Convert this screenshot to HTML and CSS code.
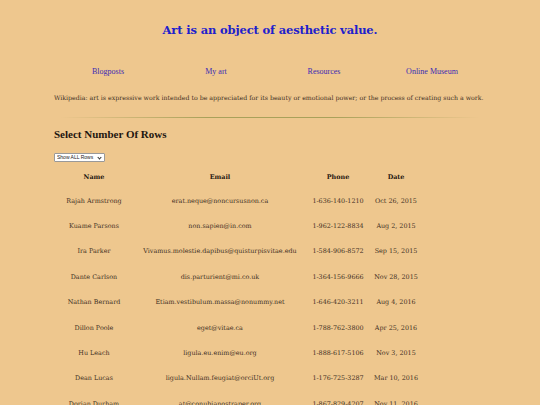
FILE: index.html
```html
<!DOCTYPE html>
<html>
<head>
<meta charset="utf-8">
<link rel="stylesheet" href="styles.css">
</head>
<body>
<div class="page">
  <h1 class="title">Art is an object of aesthetic value.</h1>
  <nav class="nav">
    <a href="#">Blogposts</a>
    <a href="#">My art</a>
    <a href="#">Resources</a>
    <a href="#">Online Museum</a>
  </nav>
  <p class="intro">Wikipedia: art is expressive work intended to be appreciated for its beauty or emotional power; or the process of creating such a work.</p>
  <hr class="rule">
  <h2 class="heading">Select Number Of Rows</h2>
  <span class="select-wrap"><select class="rows-select"><option>Show ALL Rows</option></select></span>
  <table class="data">
    <thead>
      <tr><th class="c-name">Name</th><th class="c-email">Email</th><th class="c-phone">Phone</th><th class="c-date">Date</th></tr>
    </thead>
    <tbody>
      <tr><td>Rajah Armstrong</td><td>erat.neque@noncursusnon.ca</td><td>1-636-140-1210</td><td>Oct 26, 2015</td></tr>
      <tr><td>Kuame Parsons</td><td>non.sapien@in.com</td><td>1-962-122-8834</td><td>Aug 2, 2015</td></tr>
      <tr><td>Ira Parker</td><td>Vivamus.molestie.dapibus@quisturpisvitae.edu</td><td>1-584-906-8572</td><td>Sep 15, 2015</td></tr>
      <tr><td>Dante Carlson</td><td>dis.parturient@mi.co.uk</td><td>1-364-156-9666</td><td>Nov 28, 2015</td></tr>
      <tr><td>Nathan Bernard</td><td>Etiam.vestibulum.massa@nonummy.net</td><td>1-646-420-3211</td><td>Aug 4, 2016</td></tr>
      <tr><td>Dillon Poole</td><td>eget@vitae.ca</td><td>1-788-762-3800</td><td>Apr 25, 2016</td></tr>
      <tr><td>Hu Leach</td><td>ligula.eu.enim@eu.org</td><td>1-888-617-5106</td><td>Nov 3, 2015</td></tr>
      <tr><td>Dean Lucas</td><td>ligula.Nullam.feugiat@orciUt.org</td><td>1-176-725-3287</td><td>Mar 10, 2016</td></tr>
      <tr><td>Dorian Durham</td><td>at@conubianostraper.org</td><td>1-867-829-4207</td><td>Nov 11, 2016</td></tr>
    </tbody>
  </table>
</div>
</body>
</html>
```
FILE: styles.css
```css
html, body {
  margin: 0;
  padding: 0;
  background: #eec78e;
}
body {
  font-family: "DejaVu Serif", "Liberation Serif", serif;
  color: #3e3024;
}
.page {
  width: 432px;
  margin: 0 auto;
  padding-top: 20px;
}
.title {
  margin: 0;
  text-align: center;
  font-family: "DejaVu Serif", serif;
  font-size: 11.5px;
  line-height: 20px;
  font-weight: bold;
  color: #2020cc;
  letter-spacing: -0.15px;
}
.nav {
  display: grid;
  grid-template-columns: repeat(4, 1fr);
  margin-top: 27px;
  text-align: center;
  font-family: "Liberation Serif", serif;
  font-size: 8px;
  line-height: 10px;
}
.nav a {
  color: #3a2ab4;
  text-decoration: none;
}
.intro {
  margin: 16px 0 0;
  font-size: 6.25px;
  line-height: 10px;
  white-space: nowrap;
}
.rule {
  margin: 14px 6px 0;
  height: 1px;
  border: 0;
  background: linear-gradient(to right, rgba(170,160,90,0), #a9a15a 35%, #a9a15a 65%, rgba(170,160,90,0));
}
.heading {
  margin: 8px 0 0;
  font-family: "Liberation Serif", serif;
  font-size: 11px;
  line-height: 16px;
  font-weight: bold;
  color: #1e1610;
}
.select-wrap {
  position: relative;
  display: block;
  width: 51px;
  margin-top: 11px;
}
.select-wrap::after {
  content: "";
  position: absolute;
  right: 4px;
  top: 2.5px;
  width: 2px;
  height: 2px;
  border-right: 1px solid #333;
  border-bottom: 1px solid #333;
  transform: rotate(45deg);
  pointer-events: none;
}
.rows-select {
  display: block;
  -webkit-appearance: none;
  appearance: none;
  width: 51px;
  height: 9px;
  padding: 0 0 0 2px;
  font-family: "Liberation Sans", sans-serif;
  font-size: 5px;
  line-height: 7px;
  border: 1px solid #999;
  border-radius: 1px;
  background: #fff;
  color: #222;
}
.data {
  margin-top: 4px;
  border-collapse: collapse;
  table-layout: fixed;
  font-size: 6.4px;
}
.data th, .data td {
  text-align: center;
  padding: 0;
  white-space: nowrap;
}
.data th {
  height: 22px;
  color: #1e1610;
}
.data td {
  height: 25.4px;
}
.c-name { width: 80px; }
.c-email { width: 172px; }
.c-phone { width: 64px; }
.c-date { width: 52px; }
```
